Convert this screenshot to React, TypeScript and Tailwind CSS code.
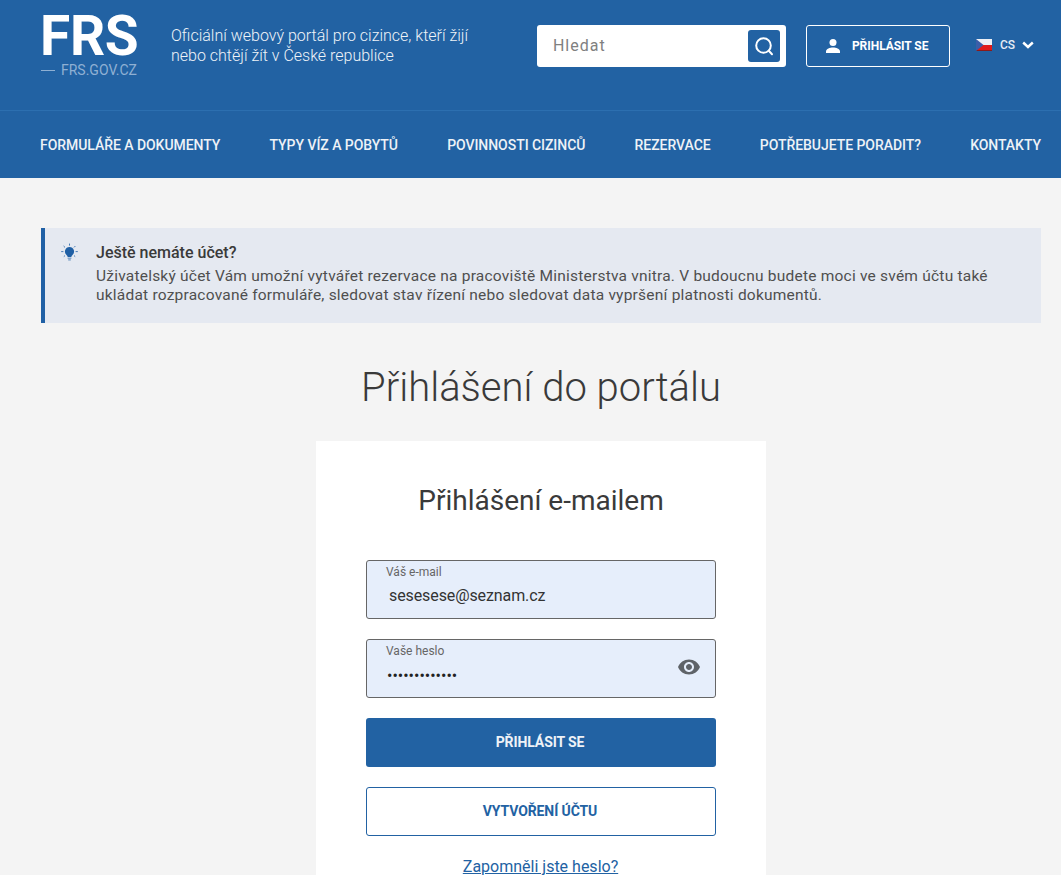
const navItems = [
  "FORMULÁŘE A DOKUMENTY",
  "TYPY VÍZ A POBYTŮ",
  "POVINNOSTI CIZINCŮ",
  "REZERVACE",
  "POTŘEBUJETE PORADIT?",
  "KONTAKTY",
];

function SearchIcon() {
  return (
    <svg width="20" height="20" viewBox="0 0 20 20" fill="none" stroke="white" strokeWidth="2">
      <circle cx="9.5" cy="9.5" r="7.3" />
      <path d="M14.8 14.8 L18 18.2" strokeLinecap="round" />
    </svg>
  );
}

function PersonIcon() {
  return (
    <svg width="16" height="14" viewBox="0 0 16 14" fill="white">
      <circle cx="8" cy="3.6" r="3.5" />
      <path d="M1 14v-1.6C1 10 5 8.6 8 8.6s7 1.4 7 3.8V14z" />
    </svg>
  );
}

function Flag() {
  return (
    <svg width="16" height="12" viewBox="0 0 16 12">
      <rect width="16" height="6" fill="#eef0f5" />
      <rect y="6" width="16" height="5" fill="#e01b1b" />
      <rect y="11" width="16" height="1" fill="#8a1a1a" />
      <path d="M0 0 L7.5 6 L0 12z" fill="#3b5ea8" />
    </svg>
  );
}

function BulbIcon() {
  return (
    <svg width="17" height="19" viewBox="0 0 17 19" fill="none">
      <path d="M8.5 4a4.6 4.6 0 0 0-2.8 8.2c.7.6.9 1.1.9 1.8h3.8c0-.7.2-1.2.9-1.8A4.6 4.6 0 0 0 8.5 4z" fill="#2060a5" />
      <rect x="6.6" y="14.6" width="3.8" height="1.2" fill="#6f97c4" />
      <rect x="7.2" y="16.3" width="2.6" height="1.2" fill="#6f97c4" />
      <path d="M8.5 0.6v2M2.6 3l1.4 1.4M14.4 3L13 4.4M0.2 8.6h2.2M14.6 8.6h2.2M2.8 13.6L4 12.6M14.2 13.6L13 12.6" stroke="#2060a5" strokeWidth="0.8" />
    </svg>
  );
}

function EyeIcon() {
  return (
    <svg className="absolute top-[15px] right-[14px]" width="24" height="24" viewBox="0 0 24 24" fill="#5f6368">
      <path d="M12 4.5C7 4.5 2.73 7.61 1 12c1.73 4.39 6 7.5 11 7.5s9.27-3.11 11-7.5c-1.73-4.39-6-7.5-11-7.5zM12 17c-2.76 0-5-2.24-5-5s2.24-5 5-5 5 2.24 5 5-2.24 5-5 5zm0-8c-1.66 0-3 1.34-3 3s1.34 3 3 3 3-1.34 3-3-1.34-3-3-3z" />
    </svg>
  );
}

export default function App() {
  return (
    <div className="h-screen overflow-hidden bg-[#f4f4f4] font-['Roboto',sans-serif] text-[#3a3a3a]">
      {/* Header */}
      <header className="bg-[#2262a3] text-white">
        <div className="flex h-[111px] border-b border-[#2c6fb0] pr-[27px] pl-[41px]">
          <div className="w-[97px] pt-[13px]">
            <div className="-ml-[1px] text-[55px] leading-[46px] font-bold tracking-[-0.3px]">FRS</div>
            <div className="mt-[3px] flex items-center gap-[6px] text-[14px] leading-[16px] text-[#8fb0d3]">
              <span className="h-[1px] w-[14px] shrink-0 bg-[#8fb0d3]" />
              FRS.GOV.CZ
            </div>
          </div>
          <p className="ml-[33px] w-[320px] pt-[26px] text-[16px] leading-[20px] font-light text-[#eef3f8]">
            Oficiální webový portál pro cizince, kteří žijí nebo chtějí žít v České republice
          </p>
          <div className="mt-[25px] ml-[46px] flex h-[42px] w-[249px] items-center justify-between rounded-[3px] bg-white pr-[6px] pl-[16px]">
            <span className="text-[16px] tracking-[1px] text-[#808080]">Hledat</span>
            <span className="flex h-[32px] w-[32px] items-center justify-center rounded-[3px] bg-[#2262a3]">
              <SearchIcon />
            </span>
          </div>
          <div className="mt-[25px] ml-[20px] flex h-[42px] w-[144px] items-center rounded-[3px] border border-white pl-[18px]">
            <PersonIcon />
            <span className="ml-[11px] text-[12px] font-bold tracking-[-0.05px]">PŘIHLÁSIT SE</span>
          </div>
          <div className="mt-[25px] ml-[26px] flex h-[40px] items-center">
            <Flag />
            <span className="ml-[8px] text-[12px] font-medium text-[#e6edf5]">CS</span>
            <svg className="ml-[7px]" width="12" height="8" viewBox="0 0 12 8" fill="none" stroke="white" strokeWidth="2.4">
              <path d="M1.2 1.5 L6 6 L10.8 1.5" />
            </svg>
          </div>
        </div>
        <nav className="flex h-[67px] items-center justify-between pt-[1px] pr-[20px] pl-[40px]">
          {navItems.map((item) => (
            <a key={item} className="text-[14px] font-medium tracking-[-0.05px] text-[#eef2f7]">
              {item}
            </a>
          ))}
        </nav>
      </header>

      <main className="pt-[50px] pr-[20px] pl-[41px]">
        {/* Info box */}
        <div className="flex h-[95px] border-l-4 border-[#2060a5] bg-[#e5e9f1] pt-[15px] pl-[16px]">
          <BulbIcon />
          <div className="ml-[18px] w-[930px]">
            <h4 className="text-[16px] leading-[20px] font-medium">Ještě nemáte účet?</h4>
            <p className="mt-[4px] text-[15.5px] leading-[19px] tracking-[0.22px] text-[#4f4f4f]">
              Uživatelský účet Vám umožní vytvářet rezervace na pracoviště Ministerstva vnitra. V budoucnu budete moci ve svém účtu také ukládat rozpracované formuláře, sledovat stav řízení nebo sledovat data vypršení platnosti dokumentů.
            </p>
          </div>
        </div>

        <h1 className="mt-[39px] text-center text-[40px] leading-[52px] font-light">Přihlášení do portálu</h1>

        {/* Login card */}
        <div className="mx-auto mt-[27px] w-[450px] bg-white px-[50px] pt-[42px] pb-[40px]">
          <h2 className="text-center text-[28px] leading-[36px]">Přihlášení e-mailem</h2>

          <div className="mt-[41px] flex h-[59px] flex-col rounded-[3px] border border-[#666] bg-[#e6eefb] pl-[19px]">
            <span className="mt-[4px] text-[12px] leading-[14px] text-[#666]">Váš e-mail</span>
            <span className="mt-[7px] ml-[3px] text-[16px] leading-[20px] tracking-[-0.1px] text-[#333]">sesesese@seznam.cz</span>
          </div>

          <div className="relative mt-[20px] flex h-[59px] flex-col rounded-[3px] border border-[#666] bg-[#e6eefb] pl-[19px]">
            <span className="mt-[4px] text-[12px] leading-[14px] text-[#666]">Vaše heslo</span>
            <span className="mt-[8px] ml-[1px] text-[16px] leading-[20px] text-[#222]">•••••••••••••</span>
            <EyeIcon />
          </div>

          <button className="mt-[20px] h-[49px] w-full rounded-[3px] bg-[#2262a3] pr-[2px] text-[14px] font-bold tracking-[-0.1px] text-[#eef2f7]">
            PŘIHLÁSIT SE
          </button>
          <button className="mt-[20px] h-[49px] w-full rounded-[3px] border border-[#2262a3] bg-white pr-[2px] text-[14px] font-bold tracking-[-0.1px] text-[#2262a3]">
            VYTVOŘENÍ ÚČTU
          </button>
          <div className="mt-[19px] pr-[1px] text-center">
            <a className="text-[16px] text-[#2262a3] underline">Zapomněli jste heslo?</a>
          </div>
        </div>
      </main>
    </div>
  );
}
